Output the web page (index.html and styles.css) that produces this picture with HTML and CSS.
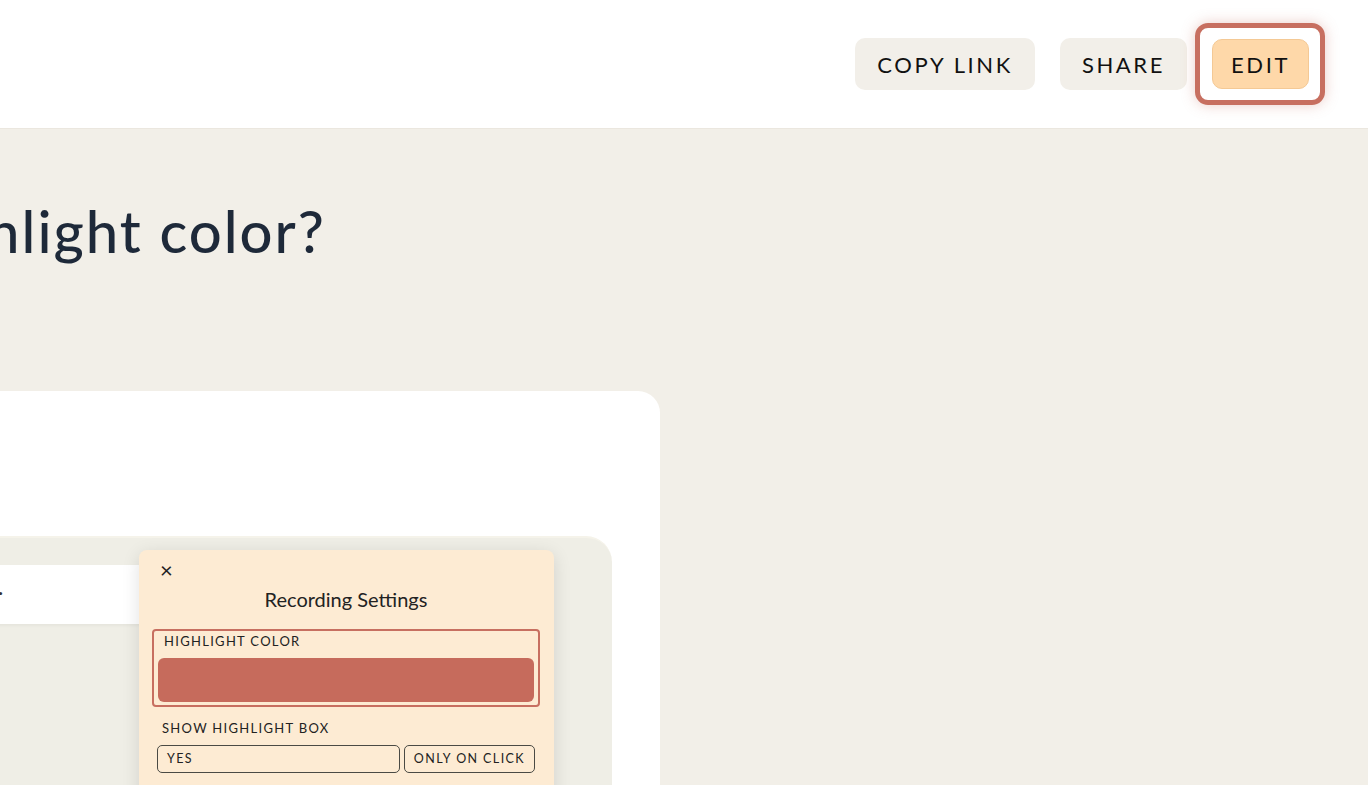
FILE: index.html
```html
<!DOCTYPE html>
<html lang="en">
<head>
  <meta charset="UTF-8" />
  <title>How do I change the highlight color?</title>
  <link rel="stylesheet" href="styles.css">
</head>
<body>

<!-- TOP BAR -->
<header class="topbar">
  <div class="actions">
    <button class="btn">Copy link</button>
    <button class="btn">Share</button>
    <div class="edit-wrap">
      <button class="btn btn-edit">Edit</button>
      <span class="focus-ring"></span>
    </div>
  </div>
</header>

<!-- CONTENT -->
<main class="page">
  <div class="title-row">
    <h1>How do I change the highlight color?</h1>
  </div>

  <section class="card">
    <div class="shot">
      <div class="shot-bar"><span class="caret">·</span></div>

      <div class="settings">
        <div class="close">&times;</div>
        <div class="settings-title">Recording Settings</div>

        <div class="field field-active">
          <div class="label">Highlight color</div>
          <div class="swatch"></div>
        </div>

        <div class="field">
          <div class="label">Show highlight box</div>
          <div class="choices">
            <div class="choice choice-wide">Yes</div>
            <div class="choice">Only on click</div>
          </div>
        </div>
      </div>
    </div>
  </section>
</main>

</body>
</html>
```

FILE: styles.css
```css
body {
  margin: 0;
  font-family: 'Lato', 'Noto Sans', sans-serif;
  background-color: #f2efe8;
  color: #1e2939;
  overflow: hidden;
  height: 785px;
}

.topbar {
  height: 128px;
  background: #ffffff;
  border-bottom: 1px solid #ebe7df;
  display: flex;
  justify-content: flex-end;
  align-items: center;
  padding-right: 59px;
}

.actions {
  display: flex;
  align-items: center;
  gap: 25px;
}

.btn {
  font-family: 'Lato', sans-serif;
  font-size: 22px;
  letter-spacing: 2.6px;
  text-transform: uppercase;
  color: #111;
  background: #f2efe9;
  border: none;
  border-radius: 10px;
  height: 52px;
  padding: 0 22px;
  cursor: pointer;
}

.edit-wrap {
  position: relative;
}

.btn-edit {
  background: #fed8a9;
  border: 1px solid #f4c995;
  height: 50px;
  padding: 0 18px;
}

.focus-ring {
  position: absolute;
  top: -16px;
  left: -17px;
  right: -16px;
  bottom: -16px;
  border: 5px solid #c76f60;
  border-radius: 13px;
  box-shadow: 0 0 14px rgba(199, 111, 96, 0.35);
  pointer-events: none;
}

.page {
  padding-top: 62px;
}

.title-row {
  width: 326px;
  display: flex;
  justify-content: flex-end;
}

.title-row h1 {
  flex-shrink: 0;
  margin: 0;
  white-space: nowrap;
  font-size: 58px;
  font-weight: 500;
  letter-spacing: 2px;
  color: #1e2939;
  line-height: 80px;
}

.card {
  margin-top: 120px;
  margin-left: -60px;
  width: 720px;
  height: 420px;
  background: #ffffff;
  border-radius: 22px;
  padding-top: 145px;
  box-sizing: border-box;
}

.shot {
  position: relative;
  width: 672px;
  height: 300px;
  background: #efeee6;
  border-top: 2px solid #f5f3ea;
  border-radius: 26px;
}

.shot-bar {
  position: absolute;
  top: 27px;
  left: 0;
  width: 220px;
  height: 59px;
  background: #ffffff;
  box-shadow: 0 2px 3px rgba(0, 0, 0, 0.04);
}

.caret {
  position: absolute;
  left: 58px;
  top: 14px;
  font-size: 20px;
  color: #333;
}

.settings {
  position: absolute;
  top: 12px;
  left: 199px;
  width: 415px;
  height: 300px;
  background: #fdebd3;
  border-radius: 8px;
  box-shadow: 0 4px 18px rgba(0, 0, 0, 0.12);
  padding: 0 14px 0 13px;
  box-sizing: border-box;
  font-family: 'Lato', sans-serif;
  color: #222;
}

.close {
  font-size: 22px;
  line-height: 20px;
  padding: 10px 0 0 8px;
  height: 20px;
}

.settings-title {
  text-align: center;
  font-size: 20px;
  line-height: 24px;
  margin-top: 7px;
  margin-bottom: 18px;
}

.field {
  padding: 4px 5px 0 6px;
}

.field-active {
  border: 2px solid #c76f60;
  border-radius: 4px;
  padding: 0 4px 3px 4px;
  margin-bottom: 12px;
}

.label {
  font-size: 13px;
  letter-spacing: 1.3px;
  text-transform: uppercase;
  line-height: 18px;
  padding: 0 0 0 6px;
  margin-bottom: 8px;
  color: #222;
}

.field-active .label {
  margin-top: 1px;
  margin-bottom: 8px;
}

.swatch {
  height: 44px;
  background: #c66b5c;
  border-radius: 6px;
}

.field + .field {
  padding: 0;
}

.field + .field .label {
  padding-left: 10px;
  margin-bottom: 8px;
}

.choices {
  display: flex;
  gap: 4px;
  padding-left: 5px;
  padding-right: 5px;
}

.choice {
  height: 26px;
  border: 1.5px solid #4a4a44;
  border-radius: 5px;
  font-size: 12.5px;
  letter-spacing: 1.4px;
  text-transform: uppercase;
  line-height: 26px;
  padding: 0 9px;
  color: #222;
}

.choice-wide {
  flex: 1;
}
```
